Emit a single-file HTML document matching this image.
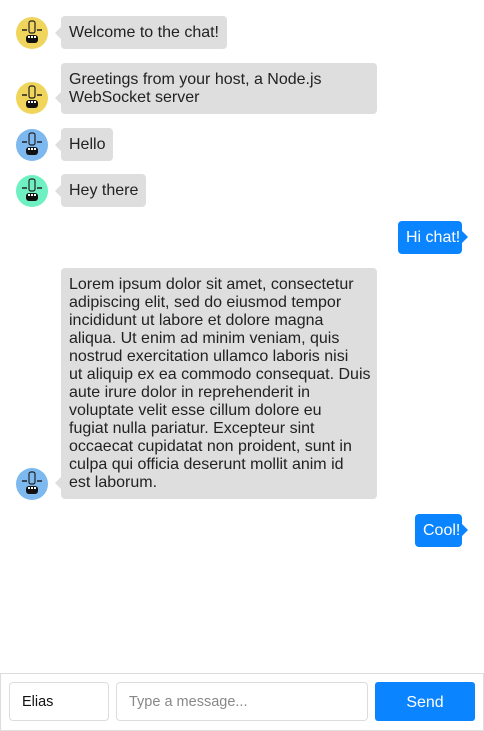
<!DOCTYPE html>
<html><head><meta charset="utf-8"><style>
*{box-sizing:border-box;margin:0;padding:0}
body{width:484px;height:731px;background:#fff;font-family:"Liberation Sans","DejaVu Sans",sans-serif;font-size:16px;color:#222;position:relative;overflow:hidden}
.b{position:absolute;background:#dedede;border-radius:4px;padding:8px 8px 7px 8px;line-height:18px;white-space:nowrap}
.b.l:before{content:"";position:absolute;left:-6px;bottom:10px;border:6px solid transparent;border-left:0;border-right-color:#dedede}
.b.r{background:#0a84ff;color:#fff}
.b.r:after{content:"";position:absolute;right:-6px;top:10px;border:6px solid transparent;border-right:0;border-left-color:#0a84ff}
.av{position:absolute;left:16px;width:32px;height:32px}
.foot{position:absolute;left:0;top:673px;width:484px;height:58px;border:1px solid #ddd}
.in{position:absolute;top:682px;height:39px;border:1px solid #ddd;border-radius:4px;padding-left:12px;line-height:39px;font-size:14.5px}
.send{position:absolute;left:375px;top:682px;width:100px;height:39px;background:#0a84ff;border-radius:3px;color:#fff;text-align:center;line-height:41px;font-size:16px}
</style></head><body>
<svg width="0" height="0" style="position:absolute"><defs>
<g id="face"><rect x="13" y="4" width="6" height="12" rx="2" fill="none" stroke="#222" stroke-width="1.2"/><path d="M6 13h5M21 13h5" stroke="#222" stroke-width="1.5"/><rect x="10" y="18" width="12" height="8" rx="3" fill="#111"/><rect x="12" y="19" width="2" height="2" fill="#fff"/><rect x="15" y="19" width="2" height="2" fill="#fff"/><rect x="18" y="19" width="2" height="2" fill="#fff"/></g>
</defs></svg>
<svg class="av" style="top:17px"><circle cx="16" cy="16" r="16" fill="#f0d55c"/><use href="#face"/></svg>
<div class="b l" style="left:61px;top:16px">Welcome to the chat!</div>
<svg class="av" style="top:82px"><circle cx="16" cy="16" r="16" fill="#f0d55c"/><use href="#face"/></svg>
<div class="b l" style="left:61px;top:63px;width:316px">Greetings from your host, a Node.js<br>WebSocket server</div>
<svg class="av" style="top:129px"><circle cx="16" cy="16" r="16" fill="#7db8ef"/><use href="#face"/></svg>
<div class="b l" style="left:61px;top:128px">Hello</div>
<svg class="av" style="top:175px"><circle cx="16" cy="16" r="16" fill="#6ef0c2"/><use href="#face"/></svg>
<div class="b l" style="left:61px;top:174px">Hey there</div>
<div class="b r" style="left:398px;top:221px;width:64px">Hi chat!</div>
<svg class="av" style="top:468px"><circle cx="16" cy="16" r="16" fill="#7db8ef"/><use href="#face"/></svg>
<div class="b l" style="left:61px;top:268px;width:316px;padding-top:8px">Lorem ipsum dolor sit amet, consectetur<br>adipiscing elit, sed do eiusmod tempor<br>incididunt ut labore et dolore magna<br>aliqua. Ut enim ad minim veniam, quis<br>nostrud exercitation ullamco laboris nisi<br>ut aliquip ex ea commodo consequat. Duis<br>aute irure dolor in reprehenderit in<br>voluptate velit esse cillum dolore eu<br>fugiat nulla pariatur. Excepteur sint<br>occaecat cupidatat non proident, sunt in<br>culpa qui officia deserunt mollit anim id<br>est laborum.</div>
<div class="b r" style="left:415px;top:514px;width:47px">Cool!</div>
<div class="foot"></div>
<div class="in" style="left:9px;width:100px;color:#111">Elias</div>
<div class="in" style="left:116px;width:252px;color:#888">Type a message...</div>
<div class="send">Send</div>
</body></html>
